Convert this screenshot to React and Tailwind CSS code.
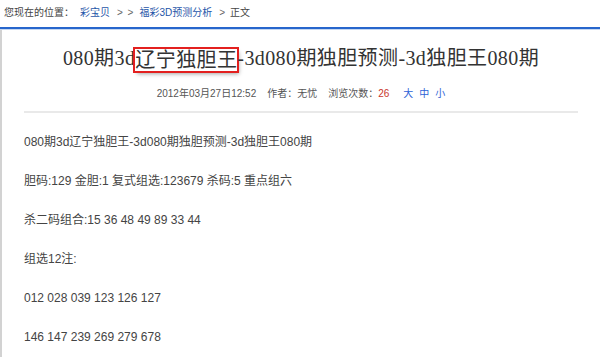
export default function App() {
  const body = [
    "080期3d辽宁独胆王-3d080期独胆预测-3d独胆王080期",
    "胆码:129 金胆:1 复式组选:123679 杀码:5 重点组六",
    "杀二码组合:15 36 48 49 89 33 44",
    "组选12注:",
    "012 028 039 123 126 127",
    "146 147 239 269 279 678",
  ];
  return (
    <div className="w-[600px] h-[357px] bg-white overflow-hidden font-['Liberation_Sans','Noto_Sans_CJK_SC',sans-serif]">
      <div className="h-[27px] flex items-center pl-[4px] pb-[3px] text-[10px] text-[#444] whitespace-pre">
        <span>您现在的位置：</span>
        <span className="ml-[6px] text-[#1f56a8]">彩宝贝</span>
        <span className="ml-[7px] text-[#666] tracking-[1px]">&gt; &gt;</span>
        <span className="ml-[5px] text-[#1f56a8]">福彩3D预测分析</span>
        <span className="ml-[7px] text-[#666]">&gt;</span>
        <span className="ml-[5px]">正文</span>
      </div>
      <div className="h-[2px] bg-[#2766cc]" />
      <div className="h-[1px] bg-[#c6d8f2]" />
      <div className="border-l-2 border-[#d2d2d2] h-[330px]">
        <div className="pt-[15px] text-center">
          <h1 className="text-[20px] leading-[26px] tracking-[0.4px] text-[#333] font-['Liberation_Serif','Noto_Sans_CJK_SC',serif] whitespace-nowrap">
            080期3d
            <span className="inline-block leading-[22px] outline-2 outline-[#e3201f] shadow-[2px_3px_4px_rgba(0,0,0,0.35)] align-middle">辽宁独胆王</span>
            -3d080期独胆预测-3d独胆王080期
          </h1>
        </div>
        <div className="mt-[16px] h-[12px] flex items-center justify-center text-[10px] text-[#555] whitespace-pre">
          <span>2012年03月27日12:52</span>
          <span className="ml-[11px]">作者：无忧</span>
          <span className="ml-[11px]">浏览次数：<span className="text-[#c8342c]">26</span></span>
          <span className="ml-[14px] text-[#2d62d6]">大</span>
          <span className="ml-[6px] text-[#2d62d6]">中</span>
          <span className="ml-[6px] text-[#2d62d6]">小</span>
        </div>
        <div className="mt-[12px] ml-[22px] mr-[22px] h-[2px] bg-[#e9e9e9]" />
        <div className="mt-[10px] pl-[22px] text-[12px] text-[#444]">
          {body.map((t, i) => (
            <p key={i} className="leading-[39px] whitespace-pre">{t}</p>
          ))}
        </div>
      </div>
    </div>
  );
}
